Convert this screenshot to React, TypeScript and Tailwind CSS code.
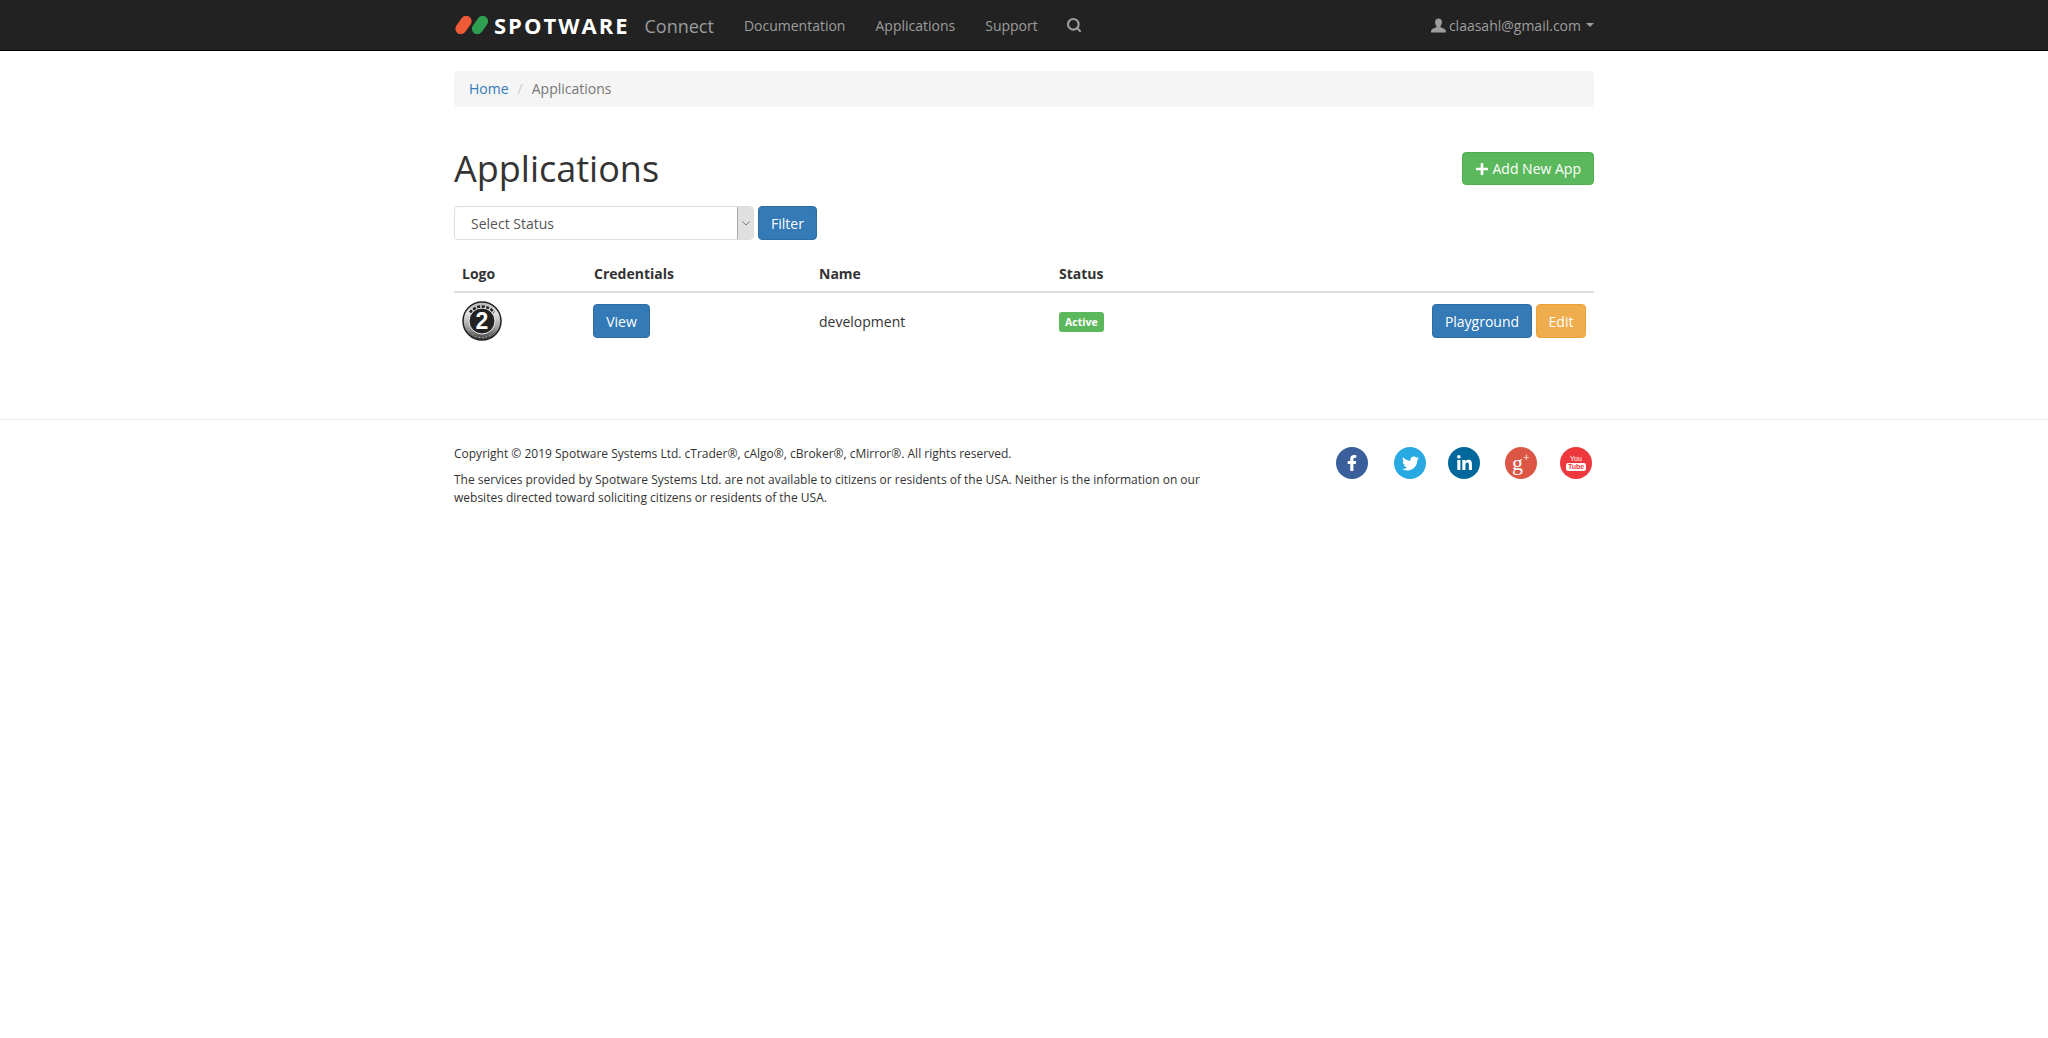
import React from 'react';
import { FaFacebookF, FaTwitter, FaLinkedinIn, FaPlus } from 'react-icons/fa';
import { Search } from 'lucide-react';

const SpotwareMark: React.FC = () => (
  <svg width="34" height="18" viewBox="0 0 34 18" className="block">
    <rect x="4" y="-1" width="11" height="20" rx="5.500" fill="#ee5a35" transform="rotate(35 9.500 9)" />
    <rect x="20.500" y="-1" width="11" height="20" rx="5.500" fill="#2f9e50" transform="rotate(35 26 9)" />
  </svg>
);

const UserGlyph: React.FC = () => (
  <svg width="15" height="15" viewBox="0 0 15 15" className="block" fill="#9d9d9d">
    <path d="M7.5 0.5c2.2 0 3.4 1.6 3.4 3.7 0 1.5-.6 3-1.4 3.8v1.3c1.9.7 4.3 1.5 5 2.6.3.5.4 1.3.4 2.6H0c0-1.3.1-2.1.4-2.6.7-1.1 3.1-1.9 5-2.6V8C4.700 7.200 4.100 5.700 4.100 4.200 4.100 2.100 5.300.5 7.500.5z" />
  </svg>
);

const GaussBadge: React.FC = () => (
  <svg width="40" height="40" viewBox="0 0 40 40" className="block">
    <defs>
      <linearGradient id="ring" x1="0" y1="0" x2="0" y2="1">
        <stop offset="0" stopColor="#b5b5b5" />
        <stop offset="0.3" stopColor="#e2e2e2" />
        <stop offset="0.7" stopColor="#9a9a9a" />
        <stop offset="1" stopColor="#333" />
      </linearGradient>
    </defs>
    <circle cx="20" cy="20" r="19" fill="url(#ring)" stroke="#222" strokeWidth="1.500" />
    <circle cx="20" cy="20" r="13" fill="#222" stroke="#eee" strokeWidth="1" />
    <path d="M8 11.500A15 15 0 0 1 32 11.500" fill="none" stroke="#222" strokeWidth="2.500" strokeDasharray="3 1.500" />
    <path d="M10 33A16 16 0 0 0 30 33" fill="none" stroke="#888" strokeWidth="1.500" strokeDasharray="2 1.500" />
    <text x="20" y="28" textAnchor="middle" fontFamily="'Liberation Sans', sans-serif" fontWeight="700" fontSize="23" fill="#fff">2</text>
  </svg>
);

const Social: React.FC<{ bg: string; className: string; children: React.ReactNode }> = ({ bg, className, children }) => (
  <a className={`flex h-8 w-8 items-center justify-center rounded-full text-white ${bg} ${className}`}>{children}</a>
);

export default function App() {
  return (
    <div className="min-h-[1038px] bg-white font-['Open_Sans','Noto_Sans',sans-serif] text-sm leading-5 text-[#333]">
      <nav className="h-[51px] border-b border-black bg-[#222]">
        <div className="mx-auto flex h-[50px] w-[1140px] items-center">
          <SpotwareMark />
          <span className="ml-[6px] text-[22px] font-bold leading-none tracking-[2px] text-white">SPOTWARE</span>
          <span className="ml-[15px] pt-px text-lg text-[#9d9d9d]">Connect</span>
          <a className="ml-[30px] pt-px text-[#9d9d9d]">Documentation</a>
          <a className="ml-[30px] pt-px text-[#9d9d9d]">Applications</a>
          <a className="ml-[30px] pt-px text-[#9d9d9d]">Support</a>
          <Search className="ml-[28px] text-[#9d9d9d]" size={16} strokeWidth={3.200} />
          <div className="ml-auto flex items-center text-[#9d9d9d]">
            <UserGlyph />
            <span className="ml-[3px] pt-px">claasahl@gmail.com</span>
            <span className="ml-[5px] h-0 w-0 border-x-4 border-t-4 border-x-transparent border-t-[#9d9d9d]" />
          </div>
        </div>
      </nav>

      <main className="mx-auto w-[1140px]">
        <div className="mt-5 flex h-9 items-center rounded bg-[#f5f5f5] px-[15px]">
          <a className="text-[#337ab7]">Home</a>
          <span className="px-[9px] text-[#ccc]">/</span>
          <span className="text-[#777]">Applications</span>
        </div>

        <div className="mt-[45px] flex h-[33px] items-center justify-between">
          <h1 className="text-4xl leading-[33px] text-[#333]">Applications</h1>
          <button className="flex h-[33px] items-center gap-1 rounded border border-[#4cae4c] bg-[#5cb85c] px-3 text-white">
            <FaPlus size={14} />
            Add New App
          </button>
        </div>

        <div className="mt-[21px] flex items-center gap-1">
          <div className="flex h-[34px] w-[300px] items-center rounded border border-[#ddd] bg-white">
            <span className="flex-1 pl-4 pt-px text-[#555]">Select Status</span>
            <span className="flex h-full w-4 items-center justify-center rounded-r border-l border-[#aaa] bg-[#e0e0e0]">
              <svg width="8" height="5" viewBox="0 0 8 5" fill="none" stroke="#777" strokeWidth="1">
                <path d="M0.500 0.500 4 4 7.500 0.500" />
              </svg>
            </span>
          </div>
          <button className="h-[34px] rounded border border-[#2e6da4] bg-[#337ab7] px-3 pt-px text-white">Filter</button>
        </div>

        <table className="mt-[15px] w-full table-fixed border-collapse">
          <colgroup>
            <col className="w-[132px]" />
            <col className="w-[225px]" />
            <col className="w-[240px]" />
            <col className="w-[237px]" />
            <col />
          </colgroup>
          <thead>
            <tr className="h-[37px] border-b-2 border-[#ddd] text-left font-bold">
              <th className="px-2 pb-[7px] align-bottom">Logo</th>
              <th className="px-2 pb-[7px] align-bottom">Credentials</th>
              <th className="px-2 pb-[7px] align-bottom">Name</th>
              <th className="px-2 pb-[7px] align-bottom">Status</th>
              <th />
            </tr>
          </thead>
          <tbody>
            <tr className="h-[56px]">
              <td className="px-2"><GaussBadge /></td>
              <td className="px-2">
                <button className="-ml-px h-[34px] w-[57px] rounded border border-[#2e6da4] bg-[#337ab7] pt-[3px] text-white">View</button>
              </td>
              <td className="px-2 pt-[2px]">development</td>
              <td className="px-2">
                <span className="mt-[2px] inline-block rounded-[3px] bg-[#5cb85c] px-[6px] py-[3px] text-[10.500px] font-bold leading-[14px] text-white">Active</span>
              </td>
              <td className="px-2">
                <div className="flex justify-end gap-1">
                  <button className="h-[34px] w-[100px] rounded border border-[#2e6da4] bg-[#337ab7] pt-[3px] text-white">Playground</button>
                  <button className="h-[34px] w-[50px] rounded border border-[#eea236] bg-[#f0ad4e] pt-[3px] text-white">Edit</button>
                </div>
              </td>
            </tr>
          </tbody>
        </table>
      </main>

      <footer className="mt-[71px] border-t border-[#eee]">
        <div className="mx-auto flex w-[1140px] justify-between pt-[25px]">
          <div className="w-[780px] text-xs leading-[18px] text-[#333]">
            <p>Copyright © 2019 Spotware Systems Ltd. cTrader®, cAlgo®, cBroker®, cMirror®. All rights reserved.</p>
            <p className="mt-[8px]">The services provided by Spotware Systems Ltd. are not available to citizens or residents of the USA. Neither is the information on our websites directed toward soliciting citizens or residents of the USA.</p>
          </div>
          <div className="mr-[2px] mt-[2px] flex">
            <Social bg="bg-[#3b5f9b]" className=""><FaFacebookF size={16} /></Social>
            <Social bg="bg-[#29a9e1]" className="ml-[26px]"><FaTwitter size={17} /></Social>
            <Social bg="bg-[#02689c]" className="ml-[22px]"><FaLinkedinIn size={17} /></Social>
            <Social bg="bg-[#dc5645]" className="ml-[25px]">
              <span className="flex items-start font-['Liberation_Serif',serif] text-[22px] leading-none">g<span className="text-xs leading-none">+</span></span>
            </Social>
            <Social bg="bg-[#ef373e]" className="ml-[23px]">
              <span className="flex flex-col items-center font-['Liberation_Sans',sans-serif] text-[7px] leading-[8px]">
                <span>You</span>
                <span className="rounded-[2px] bg-white px-[2px] font-bold text-[#ef373e]">Tube</span>
              </span>
            </Social>
          </div>
        </div>
      </footer>
    </div>
  );
}
